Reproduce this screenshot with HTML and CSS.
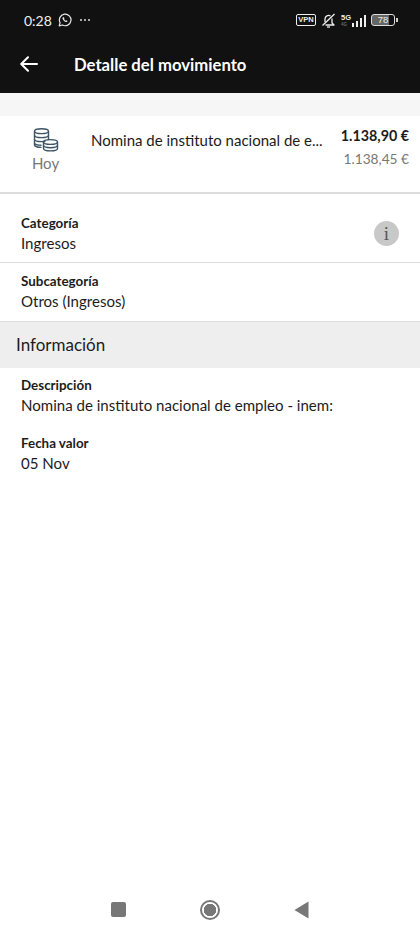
FILE: index.html
```html
<!DOCTYPE html>
<html lang="es">
<head>
    <meta charset="UTF-8">
    <meta name="viewport" content="width=device-width, initial-scale=1.0">
    <title>Detalle del movimiento</title>
    <link rel="stylesheet" href="styles.css">
</head>
<body>
    <div class="page">
        <div class="top-bar">
            <div class="status-bar">
                <div class="status-left">
                    <span class="clock">0:28</span>
                    <svg class="whatsapp" width="14" height="14" viewBox="0 0 14 14" fill="none" stroke="#e8e8e8">
                        <path d="M1.2 12.8l.9-3.1A5.8 5.8 0 1 1 4.4 12z" stroke-width="1.2" stroke-linejoin="round"/>
                        <path d="M5 4.3c-.8.6-.6 1.800.4 3 1 1.200 2.300 2 3.300 1.700.6-.2.900-.7.800-1.100L8.300 7.200l-.6.600c-.6-.2-1.300-.9-1.700-1.700l.5-.6-.6-1.300z" fill="#e8e8e8" stroke="none"/>
                    </svg>
                    <span class="dots">
                        <i></i><i></i><i></i>
                    </span>
                </div>
                <div class="status-right">
                    <span class="vpn">VPN</span>
                    <svg class="bell" width="15" height="15" viewBox="0 0 15 15" fill="none" stroke="#eee" stroke-width="1.300" stroke-linejoin="round">
                        <path d="M4 9V6a3.600 3.600 0 0 1 5.500-3M11 5.500v4.500l2 2H4.500"/>
                        <path d="M6 14h3"/>
                        <path d="M13.500 1L1.500 12.500"/>
                    </svg>
                    <div class="signal">
                        <div class="signal-labels">
                            <span class="net">5G</span>
                            <span class="hd">4G</span>
                        </div>
                        <div class="signal-bars">
                            <i class="b1"></i><i class="b2"></i><i class="b3"></i><i class="b4"></i>
                        </div>
                    </div>
                    <div class="battery">
                        <span class="battery-body">78</span>
                        <span class="battery-tip"></span>
                    </div>
                </div>
            </div>
            <div class="app-bar">
                <svg class="back" width="18" height="16" viewBox="0 0 18 16" fill="none" stroke="#fff" stroke-width="2" stroke-linecap="round" stroke-linejoin="round">
                    <path d="M17 8H1.500M8 1.200L1.200 8 8 14.800"/>
                </svg>
                <h1 class="title">Detalle del movimiento</h1>
            </div>
        </div>

        <div class="spacer-band"></div>

        <div class="movement">
            <div class="movement-date">
                <svg class="coins" width="26" height="24" viewBox="0 0 26 24" fill="none" stroke="#3d5566" stroke-width="1.400">
                    <ellipse cx="8.500" cy="3.200" rx="7" ry="2.400"/>
                    <path d="M1.500 3.200V17c0 1.200 3 2.400 7 2.400M15.500 3.200V12"/>
                    <path d="M1.500 7.200c0 1.300 3 2.400 7 2.400s7-1.100 7-2.400M1.500 11.200c0 1.300 3 2.400 7 2.400 2 0 3-.2 4-.5M1.500 15c0 1.200 3 2.300 7 2.300"/>
                    <ellipse cx="17.500" cy="14" rx="7" ry="2.400"/>
                    <path d="M10.500 14v6.500c0 1.300 3 2.400 7 2.400s7-1.100 7-2.400V14"/>
                    <path d="M10.500 17.300c0 1.300 3 2.400 7 2.400s7-1.100 7-2.400"/>
                </svg>
                <span class="date-label">Hoy</span>
            </div>
            <p class="movement-name">Nomina de instituto nacional de e...</p>
            <div class="movement-amounts">
                <span class="amount">1.138,90 €</span>
                <span class="balance">1.138,45 €</span>
            </div>
        </div>

        <div class="field field-category">
            <div>
                <p class="field-label">Categoría</p>
                <p class="field-value">Ingresos</p>
            </div>
            <span class="info-badge">i</span>
        </div>
        <div class="field field-subcategory">
            <div>
                <p class="field-label">Subcategoría</p>
                <p class="field-value">Otros (Ingresos)</p>
            </div>
        </div>

        <h2 class="section-title">Información</h2>

        <div class="info-block">
            <p class="field-label">Descripción</p>
            <p class="field-value">Nomina de instituto nacional de empleo - inem:</p>
        </div>
        <div class="info-block">
            <p class="field-label">Fecha valor</p>
            <p class="field-value">05 Nov</p>
        </div>

        <div class="nav-bar">
            <span class="nav-square"></span>
            <span class="nav-circle"></span>
            <svg class="nav-back" width="15" height="18" viewBox="0 0 15 18">
                <path d="M14.500 0.500V17.500L0.500 9z" fill="#777"/>
            </svg>
        </div>
    </div>
</body>
</html>
```

FILE: styles.css
```css
* {
    box-sizing: border-box;
}

body {
    margin: 0;
    font-family: Lato, "Noto Sans", sans-serif;
    background-color: #fff;
    color: #1c1c1c;
}

p,
h1,
h2 {
    margin: 0;
}

.page {
    display: flex;
    flex-direction: column;
    height: 934px;
    overflow: hidden;
}

/* top */
.top-bar {
    height: 93px;
    background-color: #111;
    color: #fff;
}

.status-bar {
    display: flex;
    justify-content: space-between;
    align-items: center;
    height: 40px;
    padding: 0 22px 0 24px;
}

.status-left {
    display: flex;
    align-items: center;
}

.clock {
    font-size: 14px;
    color: #eee;
    width: 34px;
}

.dots {
    display: flex;
    gap: 2px;
    margin-left: 8px;
}

.dots i {
    width: 2px;
    height: 2px;
    border-radius: 50%;
    background-color: #ddd;
}

.status-right {
    display: flex;
    align-items: center;
}

.vpn {
    display: block;
    width: 20px;
    height: 12px;
    border: 1.500px solid #eee;
    border-radius: 2px;
    font-family: "Liberation Sans", sans-serif;
    font-size: 7.500px;
    font-weight: 700;
    line-height: 9px;
    text-align: center;
    color: #eee;
}

.bell {
    margin-left: 5px;
}

.signal {
    position: relative;
    width: 25px;
    height: 13px;
    margin-left: 5px;
}

.signal-labels {
    position: absolute;
    left: 0;
    top: 0;
    display: flex;
    flex-direction: column;
    font-family: "Liberation Sans", sans-serif;
    font-weight: 700;
    line-height: 7px;
}

.net {
    font-size: 7.500px;
    color: #eee;
}

.hd {
    font-size: 4.500px;
    color: #666;
}

.signal-bars {
    position: absolute;
    right: 0;
    bottom: 0;
    display: flex;
    align-items: flex-end;
    gap: 1.500px;
}

.signal-bars i {
    width: 2.500px;
    background-color: #eee;
}

.b1 { height: 4px; }
.b2 { height: 6px; }
.b3 { height: 9px; }
.b4 { height: 12px; }

.battery {
    display: flex;
    align-items: center;
    margin-left: 5px;
}

.battery-body {
    width: 24px;
    height: 12px;
    border: 1px solid #ddd;
    border-radius: 3px;
    background: linear-gradient(90deg, #666 78%, transparent 78%);
    font-family: "Liberation Sans", sans-serif;
    font-size: 9.500px;
    line-height: 10px;
    text-align: center;
    color: #eee;
}

.battery-tip {
    width: 2px;
    height: 4px;
    margin-left: 1px;
    background-color: #ccc;
}

.app-bar {
    display: flex;
    align-items: center;
    height: 48px;
    padding-left: 20px;
}

.title {
    margin-left: 36px;
    padding-top: 1px;
    font-size: 16.700px;
    font-weight: 700;
}

/* movement card */
.spacer-band {
    height: 23px;
    background-color: #f6f6f6;
}

.movement {
    display: flex;
    align-items: flex-start;
    height: 78px;
    padding: 12px 11px 0 0;
    border-bottom: 2px solid #ddd;
}

.movement-date {
    display: flex;
    flex-direction: column;
    align-items: center;
    width: 91px;
    flex-shrink: 0;
}

.date-label {
    margin-top: 2px;
    font-size: 15px;
    color: #777;
}

.movement-name {
    margin-top: 3px;
    font-size: 15px;
    white-space: nowrap;
}

.movement-amounts {
    display: flex;
    flex-direction: column;
    align-items: flex-end;
    flex: 1;
    gap: 6px;
    margin-top: -1px;
}

.amount {
    font-size: 14.300px;
    font-weight: 700;
}

.balance {
    font-size: 13.700px;
    color: #777;
}

/* fields */
.field {
    display: flex;
    justify-content: space-between;
    padding-left: 21px;
    border-bottom: 1px solid #ddd;
}

.field-category {
    height: 69px;
    padding-top: 21px;
    padding-right: 21px;
}

.field-subcategory {
    height: 59px;
    padding-top: 10px;
}

.field-label {
    font-size: 13.400px;
    font-weight: 700;
    line-height: 16px;
}

.field-value {
    margin-top: 3px;
    font-size: 15.050px;
    line-height: 19px;
}

.info-badge {
    display: flex;
    align-items: center;
    justify-content: center;
    width: 25px;
    height: 25px;
    margin-top: 6px;
    border-radius: 50%;
    background-color: #c8c8c8;
    font-family: "Liberation Serif", serif;
    font-size: 19px;
    color: #555;
}

.section-title {
    height: 46px;
    padding-left: 16px;
    background-color: #eee;
    font-size: 17px;
    font-weight: 400;
    line-height: 46px;
}

.info-block {
    padding-left: 21px;
}

.section-title + .info-block {
    padding-top: 9px;
}

.info-block + .info-block {
    padding-top: 20px;
}

.nav-bar {
    display: flex;
    align-items: center;
    justify-content: center;
    margin-top: auto;
    height: 49px;
    gap: 74px;
}

.nav-square {
    width: 15px;
    height: 15px;
    border-radius: 2px;
    background-color: #777;
}

.nav-circle {
    width: 20px;
    height: 20px;
    border: 2px solid #777;
    border-radius: 50%;
    background: radial-gradient(circle, #777 0 6px, #fff 6.500px);
}
```
